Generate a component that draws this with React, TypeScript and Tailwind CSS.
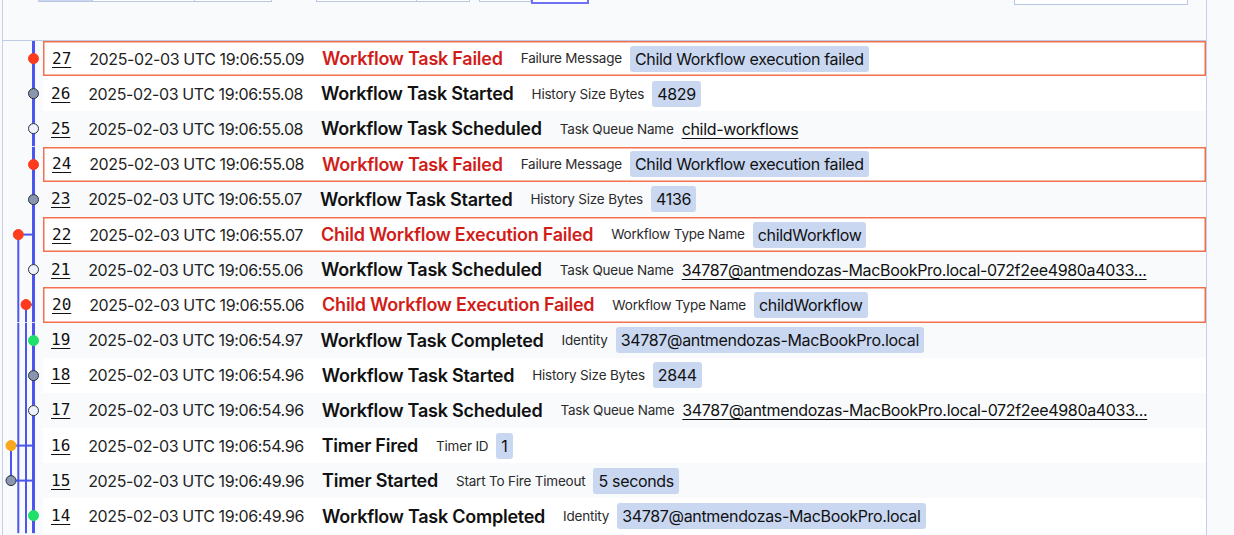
import React from "react";

type Dot = "red" | "gray" | "white" | "green" | "orange";
type Row = {
  id: number;
  ts: string;
  name: string;
  failed?: boolean;
  label: string;
  value: string;
  kind: "chip" | "link";
  dot: Dot;
  lane: number;
};

const MAIN = 30.5;
const L1 = 15.3;
const L2 = 23;
const L0 = 8;

const rows: Row[] = [
  { id: 27, ts: "2025-02-03 UTC 19:06:55.09", name: "Workflow Task Failed", failed: true, label: "Failure Message", value: "Child Workflow execution failed", kind: "chip", dot: "red", lane: MAIN },
  { id: 26, ts: "2025-02-03 UTC 19:06:55.08", name: "Workflow Task Started", label: "History Size Bytes", value: "4829", kind: "chip", dot: "gray", lane: MAIN },
  { id: 25, ts: "2025-02-03 UTC 19:06:55.08", name: "Workflow Task Scheduled", label: "Task Queue Name", value: "child-workflows", kind: "link", dot: "white", lane: MAIN },
  { id: 24, ts: "2025-02-03 UTC 19:06:55.08", name: "Workflow Task Failed", failed: true, label: "Failure Message", value: "Child Workflow execution failed", kind: "chip", dot: "red", lane: MAIN },
  { id: 23, ts: "2025-02-03 UTC 19:06:55.07", name: "Workflow Task Started", label: "History Size Bytes", value: "4136", kind: "chip", dot: "gray", lane: MAIN },
  { id: 22, ts: "2025-02-03 UTC 19:06:55.07", name: "Child Workflow Execution Failed", failed: true, label: "Workflow Type Name", value: "childWorkflow", kind: "chip", dot: "red", lane: L1 },
  { id: 21, ts: "2025-02-03 UTC 19:06:55.06", name: "Workflow Task Scheduled", label: "Task Queue Name", value: "34787@antmendozas-MacBookPro.local-072f2ee4980a4033...", kind: "link", dot: "white", lane: MAIN },
  { id: 20, ts: "2025-02-03 UTC 19:06:55.06", name: "Child Workflow Execution Failed", failed: true, label: "Workflow Type Name", value: "childWorkflow", kind: "chip", dot: "red", lane: L2 },
  { id: 19, ts: "2025-02-03 UTC 19:06:54.97", name: "Workflow Task Completed", label: "Identity", value: "34787@antmendozas-MacBookPro.local", kind: "chip", dot: "green", lane: MAIN },
  { id: 18, ts: "2025-02-03 UTC 19:06:54.96", name: "Workflow Task Started", label: "History Size Bytes", value: "2844", kind: "chip", dot: "gray", lane: MAIN },
  { id: 17, ts: "2025-02-03 UTC 19:06:54.96", name: "Workflow Task Scheduled", label: "Task Queue Name", value: "34787@antmendozas-MacBookPro.local-072f2ee4980a4033...", kind: "link", dot: "white", lane: MAIN },
  { id: 16, ts: "2025-02-03 UTC 19:06:54.96", name: "Timer Fired", label: "Timer ID", value: "1", kind: "chip", dot: "orange", lane: L0 },
  { id: 15, ts: "2025-02-03 UTC 19:06:49.96", name: "Timer Started", label: "Start To Fire Timeout", value: "5 seconds", kind: "chip", dot: "gray", lane: L0 },
  { id: 14, ts: "2025-02-03 UTC 19:06:49.96", name: "Workflow Task Completed", label: "Identity", value: "34787@antmendozas-MacBookPro.local", kind: "chip", dot: "green", lane: MAIN },
];

const LINE = "#4c56ee";
const dotFill: Record<Dot, string> = {
  red: "#ff3b1e",
  gray: "#8a96ad",
  white: "#eef2fb",
  green: "#1fe06a",
  orange: "#f7a81c",
};
const dotStroke: Record<Dot, string> = {
  red: "#ff3b1e",
  gray: "#2b3140",
  white: "#2b3140",
  green: "#1fe06a",
  orange: "#f7a81c",
};

function Gutter({ r }: { r: Row }) {
  const id = r.id;
  const l1 = id <= 21 ? "full" : id === 22 ? "half" : "none";
  const l2 = id <= 19 ? "full" : id === 20 ? "half" : "none";
  return (
    <svg width="40" height="100%" className="shrink-0 block">
      {l1 === "full" && <line x1={L1} x2={L1} y1="0" y2="100%" stroke={LINE} strokeWidth="2" />}
      {l1 === "half" && <line x1={L1} x2={L1} y1="50%" y2="100%" stroke={LINE} strokeWidth="2" />}
      {l2 === "full" && <line x1={L2} x2={L2} y1="0" y2="100%" stroke={LINE} strokeWidth="2" />}
      {l2 === "half" && <line x1={L2} x2={L2} y1="50%" y2="100%" stroke={LINE} strokeWidth="2" />}
      {id === 16 && <line x1={L0} x2={L0} y1="50%" y2="100%" stroke={LINE} strokeWidth="2" />}
      {id === 15 && <line x1={L0} x2={L0} y1="0" y2="50%" stroke={LINE} strokeWidth="2" />}
      <line x1={MAIN} x2={MAIN} y1="0" y2="100%" stroke={LINE} strokeWidth="3" />
      {r.lane !== MAIN && <line x1={r.lane} x2={MAIN} y1="50%" y2="50%" stroke={LINE} strokeWidth="2" />}
      <circle cx={r.lane} cy="50%" r="5" fill={dotFill[r.dot]} stroke={dotStroke[r.dot]} strokeWidth="1" />
    </svg>
  );
}

function EventRow({ r }: { r: Row }) {
  const bg = r.failed
    ? "bg-white ring-[1.5px] ring-inset ring-[#f4704f] pl-[9px]"
    : r.id % 2 === 1
    ? "bg-[#f8fafc] pl-[8px]"
    : "bg-white pl-[8px]";
  return (
    <div className="flex h-[35.2px]">
      <Gutter r={r} />
      <div className={`flex-1 min-w-0 flex items-center gap-[18px] ${bg}`}>
        <span className="text-[16px] underline underline-offset-[3px] text-[#111]" style={{ fontFamily: '"DejaVu Sans Mono", monospace' }}>
          {r.id}
        </span>
        <span className="text-[16px] tracking-[-0.4px] text-[#1f1f1f] whitespace-nowrap">{r.ts}</span>
        <span className={`text-[18px] font-semibold tracking-[-0.25px] whitespace-nowrap ${r.failed ? "text-[#d11d1a]" : "text-[#111]"}`}>{r.name}</span>
        <div className="flex items-center gap-2 min-w-0">
          <span className="text-[13.5px] tracking-[-0.2px] text-[#2b2b2b] whitespace-nowrap">{r.label}</span>
          {r.kind === "chip" ? (
            <span className="text-[16px] tracking-[-0.33px] text-[#111] bg-[#c9d7f1] rounded-[3px] px-[5px] h-[26px] flex items-center whitespace-nowrap">{r.value}</span>
          ) : (
            <span className="text-[16px] tracking-[-0.33px] text-[#111] underline underline-offset-[3px] whitespace-nowrap">{r.value}</span>
          )}
        </div>
      </div>
    </div>
  );
}

export default function App() {
  return (
    <div className="min-h-screen bg-[#f8fafc] pl-[2px] overflow-hidden" style={{ fontFamily: 'Inter, "Noto Sans", sans-serif' }}>
      <div className="w-[1205px] border-l border-r border-[#c4d0e8] min-h-screen">
        <div className="h-[41px] border-b border-[#bccae4] bg-[#f8fafc] flex items-start pl-[35px] pr-[18px]">
          <div className="flex -mt-[30px] h-[32px] border border-[#b9c6e4] bg-white">
            <div className="w-[54px] bg-[#c9d7f1] border-r border-[#b9c6e4]" />
            <div className="w-[102px] border-r border-[#b9c6e4]" />
            <div className="w-[76px]" />
          </div>
          <div className="flex -mt-[30px] h-[32px] ml-[44px] border border-[#b9c6e4] bg-white">
            <div className="w-[100px] border-r border-[#b9c6e4]" />
            <div className="w-[52px]" />
          </div>
          <div className="flex -mt-[30px] h-[34px] ml-[9px]">
            <div className="w-[52px] h-[32px] border border-[#b9c6e4] bg-white" />
            <div className="w-[58px] h-[34px] border-2 border-[#6f73f2] bg-white" />
          </div>
          <div className="ml-auto -mt-[30px] w-[174px] h-[35px] border border-[#b9c6e4] bg-white" />
        </div>
        <div className="flex flex-col">
          {rows.map((r) => (
            <EventRow key={r.id} r={r} />
          ))}
        </div>
      </div>
    </div>
  );
}
